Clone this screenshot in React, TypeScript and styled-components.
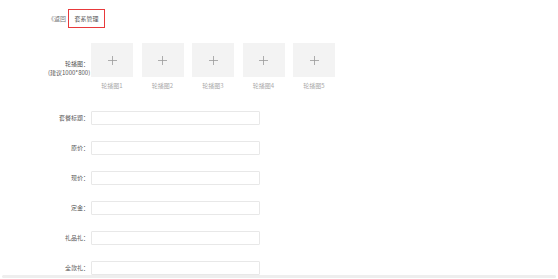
import * as React from 'react';
import styled, { createGlobalStyle } from 'styled-components';

const GlobalStyle = createGlobalStyle`
  html, body {
    margin: 0;
    padding: 0;
    background: #fff;
    font-family: "Noto Sans CJK SC", "Noto Sans", sans-serif;
  }
`;

const Page = styled.div`
  height: 279px;
  display: flex;
  flex-direction: column;
`;

const Content = styled.div`
  flex: 1;
  overflow: hidden;
  padding: 9px 0 0 48px;
`;

const Scrollbar = styled.div`
  height: 3px;
  margin: 0 2px 1px;
  background: #eeeeee;
  border-radius: 2px;
`;

const Header = styled.div`
  display: flex;
  align-items: center;
  gap: 2px;
  height: 19px;
`;

const Back = styled.span`
  font-size: 6px;
  color: #777;
`;

const Tab = styled.div`
  box-sizing: border-box;
  height: 19px;
  width: 37px;
  border: 1px solid #e8393b;
  display: flex;
  align-items: center;
  justify-content: center;
  font-size: 6px;
  color: #555;
`;

const Form = styled.div`
  display: grid;
  grid-template-columns: 41px 1fr;
  column-gap: 2px;
  row-gap: 16px;
  margin-top: 15px;
`;

const Label = styled.div<{ $top?: number }>`
  font-size: 6px;
  line-height: 9px;
  color: #555;
  text-align: right;
  white-space: nowrap;
  padding-top: ${(p) => p.$top ?? 2}px;
`;

const Uploads = styled.div`
  display: flex;
  gap: 8.5px;
  margin-bottom: 5px;
`;

const UploadItem = styled.div`
  display: flex;
  flex-direction: column;
  align-items: center;
  width: 42px;
`;

const UploadBox = styled.div`
  width: 42px;
  height: 34px;
  background: #f3f3f3;
  display: flex;
  align-items: center;
  justify-content: center;
`;

const Caption = styled.div`
  margin-top: 5px;
  font-size: 6px;
  line-height: 8px;
  color: #aaa;
`;

const Input = styled.input`
  box-sizing: border-box;
  width: 169px;
  height: 14px;
  border: 1px solid #e8e8e8;
  border-radius: 1px;
  padding: 0 3px;
  font-size: 6px;
  outline: none;
  display: block;
`;

function Plus(): JSX.Element {
  return (
    <svg width="9" height="9" viewBox="0 0 9 9">
      <path d="M4.5 0v9M0 4.5h9" stroke="#999" strokeWidth="0.8" fill="none" />
    </svg>
  );
}

const fields = ['套餐标题：', '原价：', '现价：', '定金：', '礼品礼：', '全款礼：'];

export default function App(): JSX.Element {
  return (
    <Page>
      <GlobalStyle />
      <Content>
        <Header>
          <Back>《返回</Back>
          <Tab>套系管理</Tab>
        </Header>
        <Form>
          <Label $top={16}>
            轮播图：
            <br />
            (建议1000*800)
          </Label>
          <Uploads>
            {[1, 2, 3, 4, 5].map((n) => (
              <UploadItem key={n}>
                <UploadBox>
                  <Plus />
                </UploadBox>
                <Caption>轮播图{n}</Caption>
              </UploadItem>
            ))}
          </Uploads>
          {fields.map((f) => (
            <React.Fragment key={f}>
              <Label>{f}</Label>
              <Input />
            </React.Fragment>
          ))}
        </Form>
      </Content>
      <Scrollbar />
    </Page>
  );
}
